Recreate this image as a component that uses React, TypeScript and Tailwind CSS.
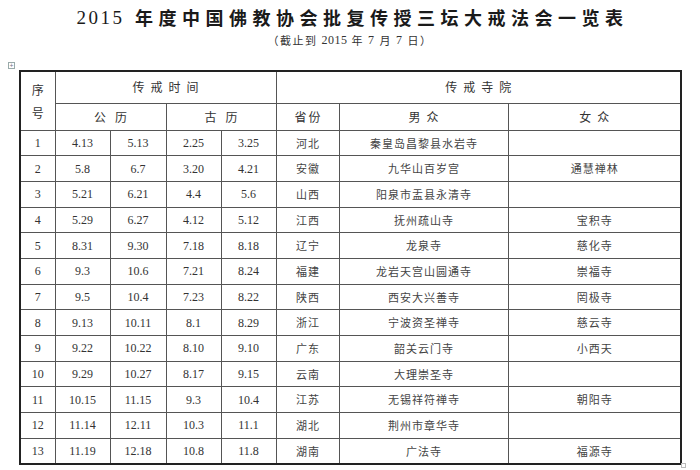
import React from "react"

type Row = [string, string, string, string, string, string, string, string]

const rows: Row[] = [
  ["1", "4.13", "5.13", "2.25", "3.25", "河北", "秦皇岛昌黎县水岩寺", ""],
  ["2", "5.8", "6.7", "3.20", "4.21", "安徽", "九华山百岁宫", "通慧禅林"],
  ["3", "5.21", "6.21", "4.4", "5.6", "山西", "阳泉市盂县永清寺", ""],
  ["4", "5.29", "6.27", "4.12", "5.12", "江西", "抚州疏山寺", "宝积寺"],
  ["5", "8.31", "9.30", "7.18", "8.18", "辽宁", "龙泉寺", "慈化寺"],
  ["6", "9.3", "10.6", "7.21", "8.24", "福建", "龙岩天宫山圆通寺", "崇福寺"],
  ["7", "9.5", "10.4", "7.23", "8.22", "陕西", "西安大兴善寺", "罔极寺"],
  ["8", "9.13", "10.11", "8.1", "8.29", "浙江", "宁波资圣禅寺", "慈云寺"],
  ["9", "9.22", "10.22", "8.10", "9.10", "广东", "韶关云门寺", "小西天"],
  ["10", "9.29", "10.27", "8.17", "9.15", "云南", "大理崇圣寺", ""],
  ["11", "10.15", "11.15", "9.3", "10.4", "江苏", "无锡祥符禅寺", "朝阳寺"],
  ["12", "11.14", "12.11", "10.3", "11.1", "湖北", "荆州市章华寺", ""],
  ["13", "11.19", "12.18", "10.8", "11.8", "湖南", "广法寺", "福源寺"],
]

const cjk = "font-['Noto_Sans_CJK_SC',sans-serif]"
const serif = "font-['Liberation_Serif','Noto_Sans_CJK_SC',serif]"

const cell = "border border-[#555] text-center align-middle p-0"
const head = `${cell} ${cjk} text-[12px] text-[#333]`

export default function App() {
  return (
    <div className="relative h-[470px] w-[700px] overflow-hidden bg-white text-[#222]">
      <div className="flex flex-col items-center">
        <h1
          className={`${cjk} mt-[5px] flex h-[24px] items-center pl-[5px] text-[18px] leading-none font-bold tracking-[5.5px] whitespace-pre text-[#1a1a1a]`}
        >
          <span className={`${serif} mr-[1px] text-[19px] font-normal tracking-[2.5px]`}>2015</span>
          {" 年度中国佛教协会批复传授三坛大戒法会一览表"}
        </h1>
        <p
          className={`${cjk} mt-[3px] flex h-[16px] items-center text-[11px] leading-none tracking-[1.5px] whitespace-pre text-[#333]`}
        >
          {"（截止到 "}
          <span className={`${serif} text-[12px] tracking-[0.5px]`}>2015</span>
          {" 年 "}
          <span className={`${serif} text-[12px]`}>7</span>
          {" 月 "}
          <span className={`${serif} text-[12px]`}>7</span>
          {" 日）"}
        </p>
      </div>

      <div className="absolute top-[62px] left-[8px] flex h-[7px] w-[7px] items-center justify-center border border-[#9aa] text-[7px] leading-none text-[#778]">
        +
      </div>

      <table className="mt-[22px] ml-[19px] w-[661px] table-fixed border-collapse border-2 border-[#222]">
        <colgroup>
          <col className="w-[35px]" />
          <col className="w-[55px]" />
          <col className="w-[56px]" />
          <col className="w-[55px]" />
          <col className="w-[55px]" />
          <col className="w-[63px]" />
          <col className="w-[169px]" />
          <col className="w-[173px]" />
        </colgroup>
        <thead>
          <tr className="h-[32px]">
            <td rowSpan={2} className={`${head} leading-[23px]`}>
              序
              <br />号
            </td>
            <td colSpan={4} className={`${head} pl-[6px] tracking-[6px]`}>
              传戒时间
            </td>
            <td colSpan={3} className={`${head} pl-[6px] tracking-[6px]`}>
              传戒寺院
            </td>
          </tr>
          <tr className="h-[27px]">
            <td colSpan={2} className={`${head} pl-[9px] tracking-[9px]`}>
              公历
            </td>
            <td colSpan={2} className={`${head} pl-[9px] tracking-[9px]`}>
              古历
            </td>
            <td className={`${head} pl-[2px] text-[11px] tracking-[2px]`}>省份</td>
            <td className={`${head} pl-[6px] tracking-[6px]`}>男众</td>
            <td className={`${head} pl-[6px] tracking-[6px]`}>女众</td>
          </tr>
        </thead>
        <tbody>
          {rows.map((r) => (
            <tr key={r[0]} className="h-[25.7px]">
              {r.slice(0, 5).map((v, i) => (
                <td key={i} className={`${cell} ${serif} text-[12px] text-[#333]`}>
                  {v}
                </td>
              ))}
              <td className={`${cell} ${cjk} pl-[1px] text-[11px] tracking-[1px] text-[#444]`}>{r[5]}</td>
              <td className={`${cell} ${cjk} pl-[1px] text-[11px] tracking-[1px] text-[#444]`}>{r[6]}</td>
              <td className={`${cell} ${cjk} pl-[1px] text-[11px] tracking-[1px] text-[#444]`}>{r[7]}</td>
            </tr>
          ))}
        </tbody>
      </table>

      <div className="absolute top-[463px] left-[681px] h-[5px] w-[5px] border border-[#bbb]" />
    </div>
  )
}
